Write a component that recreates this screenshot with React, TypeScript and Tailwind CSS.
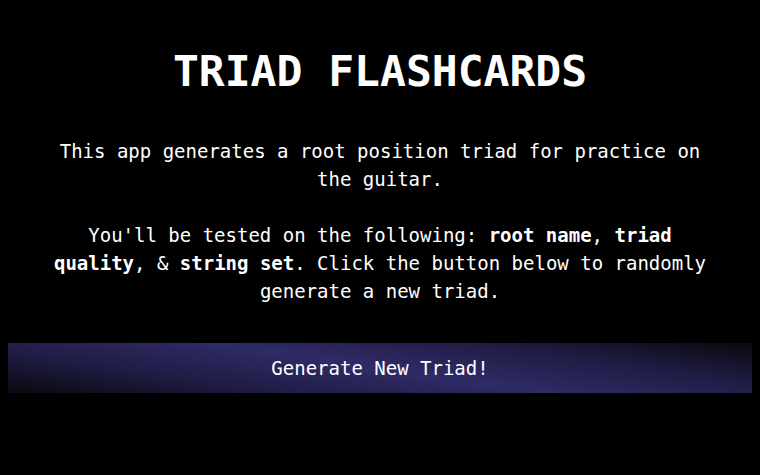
export default function App() {
  return (
    <div
      className="min-h-screen bg-black text-white px-2"
      style={{ fontFamily: '"DejaVu Sans Mono", "Liberation Mono", monospace' }}
    >
      <h1 className="pt-[46px] text-center text-[43px] leading-[50px] font-bold">
        TRIAD FLASHCARDS
      </h1>
      <div className="mx-auto mt-[41px] max-w-[670px] text-center text-[19px] leading-[28px]">
        <p>This app generates a root position triad for practice on the guitar.</p>
        <p className="mt-[28px]">
          You'll be tested on the following: <b>root name</b>, <b>triad quality</b>, &amp;{" "}
          <b>string set</b>. Click the button below to randomly generate a new triad.
        </p>
      </div>
      <button
        type="button"
        className="mt-[38px] flex h-[50px] w-full items-center justify-center text-[19px] text-white"
        style={{
          background:
            "linear-gradient(8.5deg, #09090e 0%, #1f1c44 25%, #2f2b66 50%, #1f1c44 75%, #09090e 100%)",
        }}
      >
        Generate New Triad!
      </button>
    </div>
  );
}
